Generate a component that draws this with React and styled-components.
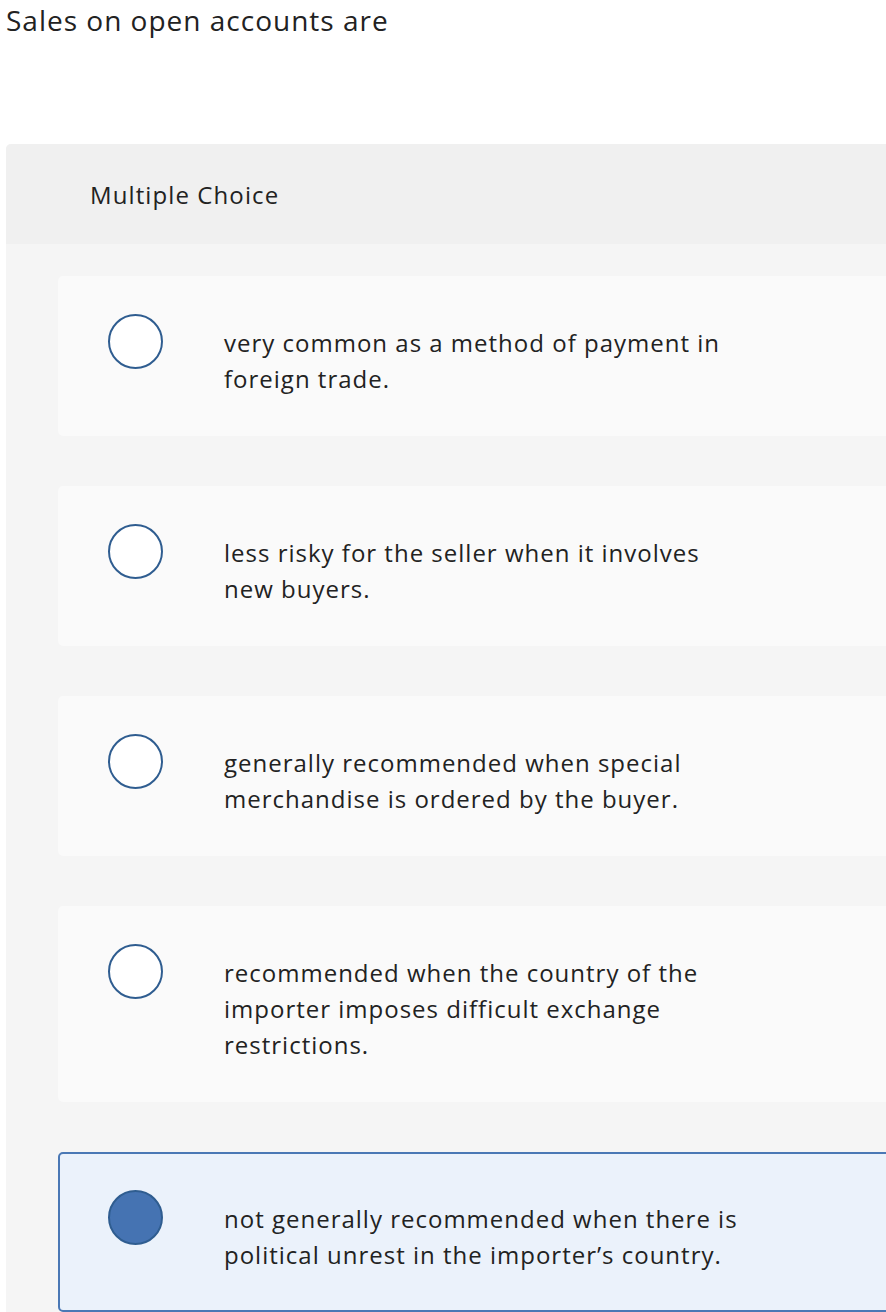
import React from "react";
import styled, { createGlobalStyle } from "styled-components";

const Global = createGlobalStyle`
  html, body { margin: 0; padding: 0; background: #fff; }
  body { font-family: "Open Sans", "Liberation Sans", sans-serif; color: #222; overflow: hidden; }
`;

const Page = styled.div`
  width: 886px;
  height: 1312px;
  overflow: hidden;
  padding-left: 6px;
  box-sizing: border-box;
`;

const Question = styled.h1`
  margin: 0;
  font-weight: 400;
  font-size: 28px;
  letter-spacing: 1px;
  line-height: 40px;
  color: #222;
`;

const Panel = styled.section`
  margin-top: 104px;
  width: 920px;
  background: #f5f5f5;
  border-radius: 5px 0 0 0;
`;

const PanelHeader = styled.div`
  height: 100px;
  display: flex;
  align-items: center;
  padding-left: 84px;
  background: #f0f0f0;
  border-radius: 5px 0 0 0;
  font-size: 24px;
  letter-spacing: 1.1px;
  color: #222;
`;

const Options = styled.div`
  display: flex;
  flex-direction: column;
  gap: 50px;
  padding: 32px 0 0 52px;
`;

const Option = styled.label`
  display: flex;
  align-items: flex-start;
  box-sizing: border-box;
  padding: ${(p) => (p.$selected ? "36px 0 37px 48px" : "38px 0 39px 50px")};
  background: ${(p) => (p.$selected ? "#ebf2fb" : "#fafafa")};
  border: ${(p) => (p.$selected ? "2px solid #4a78b5" : "none")};
  border-radius: 5px;
  cursor: pointer;
`;

const Radio = styled.span`
  flex: none;
  width: 55px;
  height: 55px;
  box-sizing: border-box;
  border-radius: 50%;
  border: 2px solid #2f5d90;
  background: ${(p) => (p.$selected ? "#4573b2" : "#fff")};
`;

const OptionText = styled.span`
  margin-left: 61px;
  padding-top: 11px;
  max-width: 520px;
  font-size: 24px;
  letter-spacing: 1px;
  line-height: 36px;
  color: #222;
`;

const choices = [
  "very common as a method of payment in foreign trade.",
  "less risky for the seller when it involves new buyers.",
  "generally recommended when special merchandise is ordered by the buyer.",
  "recommended when the country of the importer imposes difficult exchange restrictions.",
  "not generally recommended when there is political unrest in the importer\u2019s country.",
];

export default function App() {
  const selected = 4;
  return (
    <Page>
      <Global />
      <Question>Sales on open accounts are</Question>
      <Panel>
        <PanelHeader>Multiple Choice</PanelHeader>
        <Options>
          {choices.map((c, i) => (
            <Option key={i} $selected={i === selected}>
              <Radio $selected={i === selected} />
              <OptionText>{c}</OptionText>
            </Option>
          ))}
        </Options>
      </Panel>
    </Page>
  );
}
